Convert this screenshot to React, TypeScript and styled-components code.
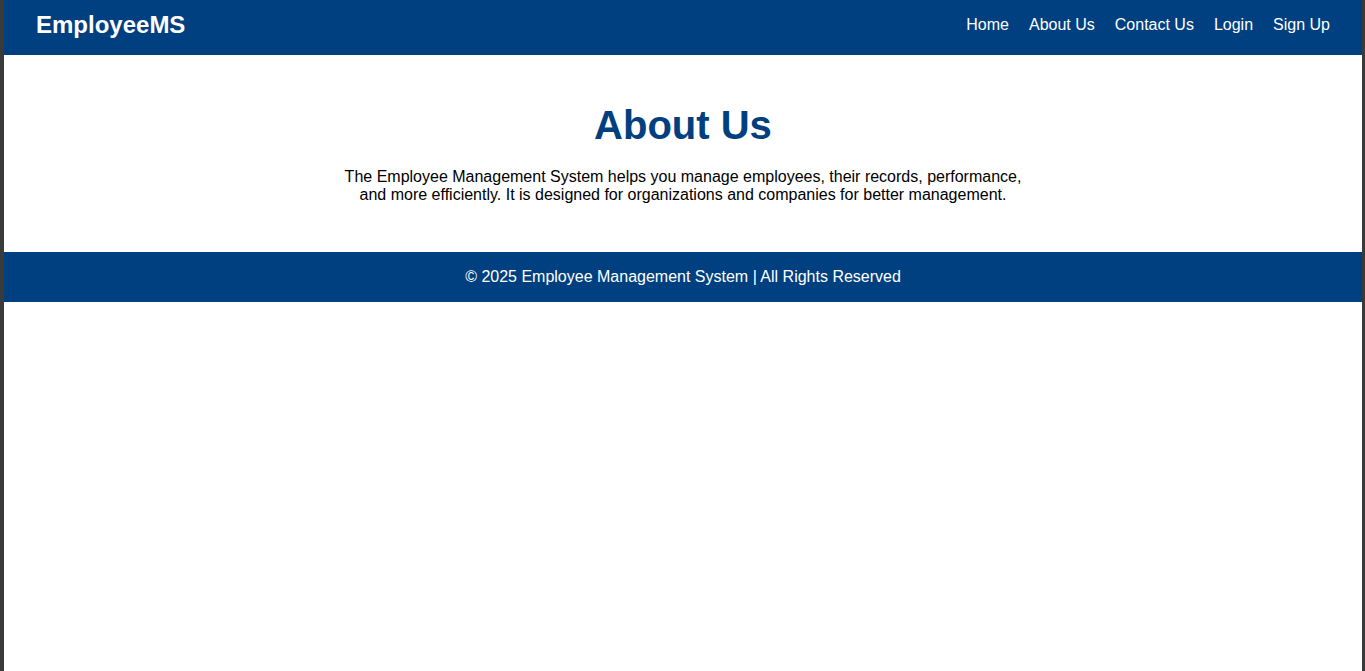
import React from "react";
import styled, { createGlobalStyle } from "styled-components";

const GlobalStyle = createGlobalStyle`
  html, body {
    margin: 0;
    padding: 0;
    background: #3a3a3a;
  }
  body {
    font-family: "Liberation Sans", Arial, sans-serif;
  }
  * { box-sizing: border-box; }
`;

const Page = styled.div`
  min-height: 100vh;
  margin: 0 3px 0 4px;
  background: #ffffff;
  display: flex;
  flex-direction: column;
`;

const Header = styled.header`
  height: 55px;
  padding: 0 32px 6px;
  background: #004080;
  color: #ffffff;
  display: flex;
  align-items: center;
  justify-content: space-between;
`;

const Logo = styled.div`
  font-size: 24px;
  font-weight: bold;
`;

const Nav = styled.nav`
  display: flex;
  gap: 20px;
`;

const NavLink = styled.a`
  color: #ffffff;
  text-decoration: none;
  font-size: 16px;
  cursor: pointer;
`;

const Main = styled.main`
  padding: 48px 20px 48px;
  text-align: center;
`;

const Title = styled.h1`
  margin: 0 0 20px;
  font-size: 40px;
  font-weight: bold;
  color: #004080;
`;

const Text = styled.p`
  margin: 0 auto;
  max-width: 700px;
  font-size: 16px;
  color: #000000;
`;

const Footer = styled.footer`
  height: 50px;
  background: #004080;
  color: #ffffff;
  font-size: 16px;
  display: flex;
  align-items: center;
  justify-content: center;
`;

export default function App() {
  const links = ["Home", "About Us", "Contact Us", "Login", "Sign Up"];
  return (
    <>
      <GlobalStyle />
      <Page>
        <Header>
          <Logo>EmployeeMS</Logo>
          <Nav>
            {links.map((l) => (
              <NavLink key={l}>{l}</NavLink>
            ))}
          </Nav>
        </Header>
        <Main>
          <Title>About Us</Title>
          <Text>
            The Employee Management System helps you manage employees, their records, performance,
            and more efficiently. It is designed for organizations and companies for better management.
          </Text>
        </Main>
        <Footer>© 2025 Employee Management System | All Rights Reserved</Footer>
      </Page>
    </>
  );
}
